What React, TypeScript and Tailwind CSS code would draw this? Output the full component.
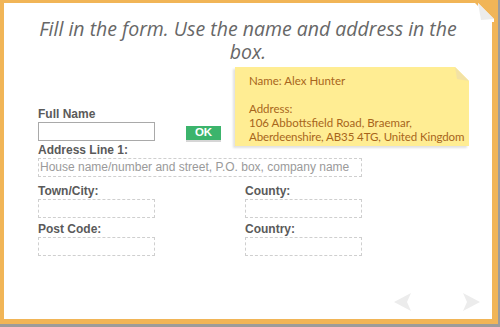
import React from 'react';

const Label = ({ children, className = '' }: { children: React.ReactNode; className?: string }) => (
  <div className={`text-[12px] font-bold leading-[13px] text-[#5a5a5a] ${className}`}>{children}</div>
);

const Field = ({ label, width, children }: { label: string; width: string; children?: React.ReactNode }) => (
  <div className={width}>
    <Label>{label}</Label>
    <div className="mt-[1px] h-[19px] overflow-hidden whitespace-nowrap border border-dashed border-[#cfcfcf] px-[1px] text-[12px] leading-[17px] text-[#9a9a9a]">
      {children}
    </div>
  </div>
);

const App = () => {
  return (
    <div className="relative h-[327px] w-[500px] overflow-hidden bg-[#9c9c9c]" style={{ fontFamily: '"Liberation Sans", sans-serif' }}>
      <div className="relative h-[324px] w-[498px] border-b-[5px] border-l-[4px] border-r-[6px] border-t-[3px] border-[#f1b557] bg-white">
        {/* folded page corner */}
        <svg className="absolute -right-[6px] -top-[3px]" width="26" height="26" viewBox="0 0 26 26">
          <polygon points="0,0 26,0 26,26" fill="#f1b557" />
          <polygon points="6,3 22,19 22,22 6,22" fill="#ffffff" />
          <polygon points="6,3 22,19 9,20" fill="#ececec" />
        </svg>

        <h1
          className="px-[30px] pt-[14px] text-center text-[19.5px] italic leading-[23px] text-[#676767]"
          style={{ fontFamily: '"Open Sans", sans-serif' }}
        >
          Fill in the form. Use the name and address in the box.
        </h1>

        {/* sticky note */}
        <div
          className="absolute left-[231px] top-[64px] h-[79px] w-[234px] bg-[#ffed93] pl-[14px] pt-[7px] text-[11.5px] leading-[14px] text-[#a8651b] shadow-[-2px_2px_2px_rgba(0,0,0,0.12)]"
          style={{ fontFamily: 'Lato, sans-serif' }}
        >
          <svg className="absolute right-0 top-0" width="14" height="14" viewBox="0 0 14 14">
            <polygon points="0,0 14,0 14,14" fill="#ffffff" />
            <polygon points="0,0 14,14 2,12" fill="#f3e2a4" />
          </svg>
          <div>Name: Alex Hunter</div>
          <div className="mt-[14px]">Address:</div>
          <div>106 Abbottsfield Road, Braemar,</div>
          <div className="tracking-[-0.1px]">Aberdeenshire, AB35 4TG, United Kingdom</div>
        </div>

        <div className="pl-[34px] pt-[45px]">
          <Label>Full Name</Label>
          <div className="mt-[1px] flex items-center">
            <div className="h-[19px] w-[117px] border border-[#a9a9a9]" />
            <div className="ml-[31px] mt-[3px] flex h-[14px] w-[35px] items-center justify-center bg-[#3cb46c] text-[11.5px] font-bold text-white shadow-[0_2px_0_#d6d6d6]">
              OK
            </div>
          </div>
          <div className="mt-[3px]">
            <Field label="Address Line 1:" width="w-[324px]">
              House name/number and street, P.O. box, company name
            </Field>
          </div>
          <div className="mt-[8px] flex gap-[90px]">
            <Field label="Town/City:" width="w-[117px]" />
            <Field label="County:" width="w-[117px]" />
          </div>
          <div className="mt-[5px] flex gap-[90px]">
            <Field label="Post Code:" width="w-[117px]" />
            <Field label="Country:" width="w-[117px]" />
          </div>
        </div>

        {/* nav arrows */}
        <div className="absolute bottom-[8px] right-[12px] flex gap-[50px]">
          <svg width="18" height="18" viewBox="0 0 18 18">
            <polygon points="17,0 0,9 17,18 13,9" fill="#ececec" />
          </svg>
          <svg width="18" height="18" viewBox="0 0 18 18">
            <polygon points="1,0 18,9 1,18 5,9" fill="#ececec" />
          </svg>
        </div>
      </div>
    </div>
  );
};

export default App;
